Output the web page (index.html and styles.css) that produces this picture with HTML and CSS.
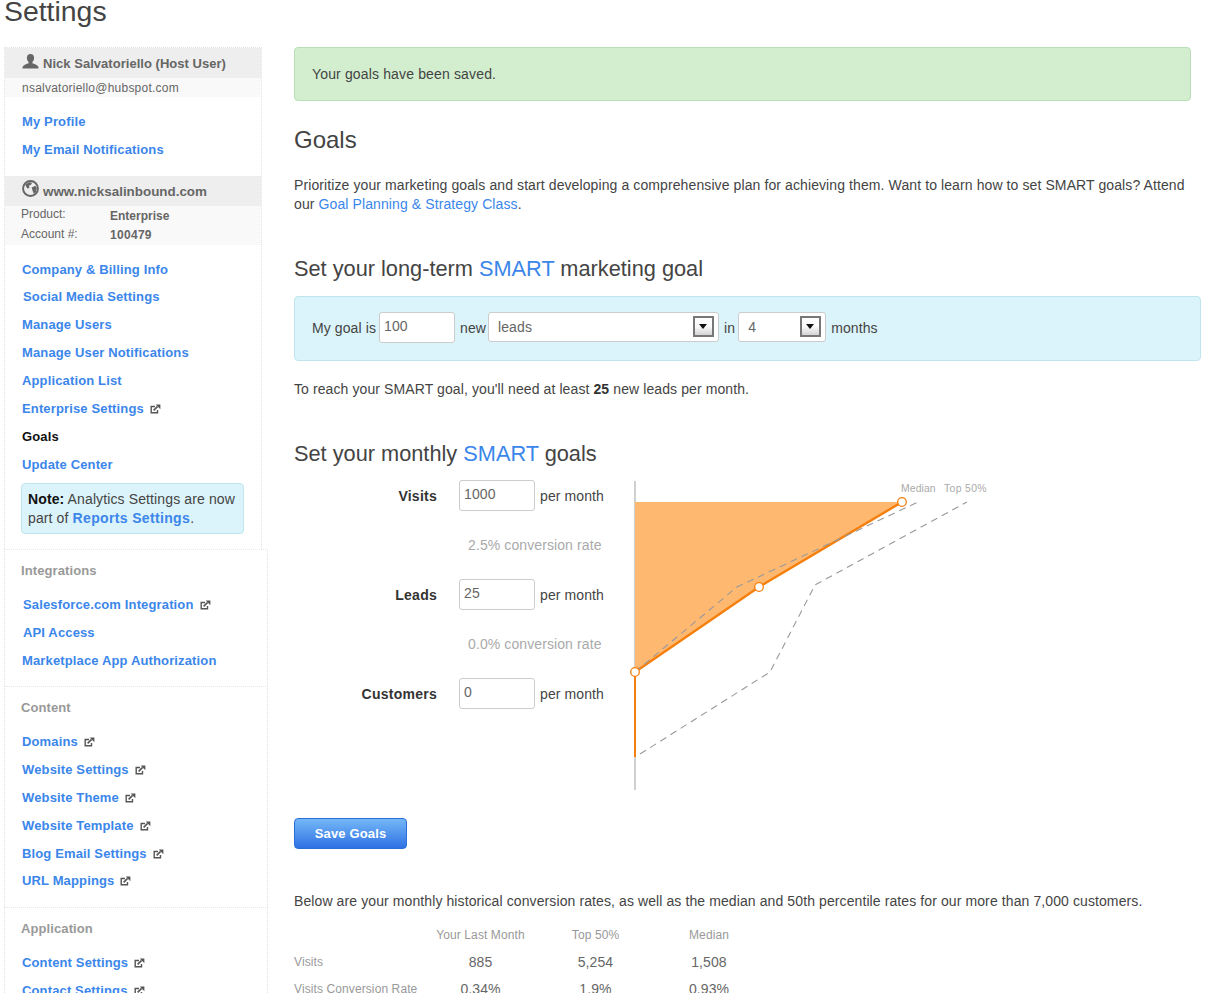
FILE: index.html
```html
<!DOCTYPE html>
<html lang="en">
<head>
<meta charset="utf-8">
<title>Settings</title>
<link rel="stylesheet" href="styles.css">
</head>
<body>
<svg class="defs" width="0" height="0" aria-hidden="true">
  <symbol id="ext" viewBox="0 0 11 10">
    <path d="M5 2.500H1.200v6.300h6.300V6" fill="none" stroke="#555" stroke-width="1.400"/>
    <path d="M3.600 6.400 7.600 2.400" fill="none" stroke="#555" stroke-width="1.600"/>
    <path d="M5.800 0.600H10.400V5.200Z" fill="#555"/>
  </symbol>
</svg>
<h1 class="title">Settings</h1>
<div class="layout">
  <nav class="side">
    <div class="box">
      <div class="head"><svg class="hicon" viewBox="0 0 16 15"><path d="M8 0c2.300 0 3.600 1.700 3.600 3.900 0 1.700-.8 3.200-1.700 4v1.400c1.700.7 5.100 1.700 5.800 3.200.2.600.3 1.300.3 2.100H0c0-.8.100-1.500.3-2.100.7-1.500 4.100-2.500 5.800-3.200V7.900C5.200 7.100 4.400 5.600 4.400 3.900 4.400 1.700 5.700 0 8 0z" fill="#666"/></svg><b class="user-name">Nick Salvatoriello (Host User)</b></div>
      <div class="sub email">nsalvatoriello@hubspot.com</div>
      <ul class="links first">
        <li><a>My Profile</a></li>
        <li><a>My Email Notifications</a></li>
      </ul>
      <div class="head site"><svg class="hicon globe" viewBox="0 0 16 16"><circle cx="8" cy="8" r="7" fill="none" stroke="#666" stroke-width="1.800"/><path d="M3 4.500 6.500 2l3 .5-1 2-2 1 .5 2-2 .5zM9 7l3.500-1.500 1.500 2-1 4-2 1.500-1-3z" fill="#666"/></svg><b>www.nicksalinbound.com</b></div>
      <div class="sub account">
        <div class="acct-row"><span>Product:</span><b>Enterprise</b></div>
        <div class="acct-row"><span>Account #:</span><b>100479</b></div>
      </div>
      <ul class="links second">
        <li><a>Company &amp; Billing Info</a></li>
        <li class="nudge"><a>Social Media Settings</a></li>
        <li><a>Manage Users</a></li>
        <li><a>Manage User Notifications</a></li>
        <li><a>Application List</a></li>
        <li><a>Enterprise Settings</a><svg class="ext"><use href="#ext"/></svg></li>
        <li class="current">Goals</li>
        <li><a>Update Center</a></li>
      </ul>
      <div class="note"><b>Note:</b> Analytics Settings are now part of <a>Reports Settings</a>.</div>
    </div>
    <div class="group">
      <div class="group-title">Integrations</div>
      <ul class="links">
        <li class="nudge"><a>Salesforce.com Integration</a><svg class="ext"><use href="#ext"/></svg></li>
        <li class="nudge"><a>API Access</a></li>
        <li><a>Marketplace App Authorization</a></li>
      </ul>
    </div>
    <div class="group">
      <div class="group-title">Content</div>
      <ul class="links">
        <li><a>Domains</a><svg class="ext"><use href="#ext"/></svg></li>
        <li><a>Website Settings</a><svg class="ext"><use href="#ext"/></svg></li>
        <li><a>Website Theme</a><svg class="ext"><use href="#ext"/></svg></li>
        <li><a>Website Template</a><svg class="ext"><use href="#ext"/></svg></li>
        <li><a>Blog Email Settings</a><svg class="ext"><use href="#ext"/></svg></li>
        <li><a>URL Mappings</a><svg class="ext"><use href="#ext"/></svg></li>
      </ul>
    </div>
    <div class="group">
      <div class="group-title">Application</div>
      <ul class="links">
        <li><a>Content Settings</a><svg class="ext"><use href="#ext"/></svg></li>
        <li><a>Contact Settings</a><svg class="ext"><use href="#ext"/></svg></li>
      </ul>
    </div>
  </nav>

  <main class="main">
    <div class="saved">Your goals have been saved.</div>
    <h2 class="goals-title">Goals</h2>
    <p class="intro">Prioritize your marketing goals and start developing a comprehensive plan for achieving them. Want to learn how to set SMART goals? Attend our <a class="link">Goal Planning &amp; Strategy Class</a>.</p>
    <h3 class="sub-title long">Set your long-term <a class="link">SMART</a> marketing goal</h3>
    <div class="goal-box">
      <span>My goal is</span>
      <span class="input w76 tall">100</span>
      <span class="after">new</span>
      <span class="select w231"><span>leads</span><i class="arrow"></i></span>
      <span class="after">in</span>
      <span class="select w88"><span>4</span><i class="arrow"></i></span>
      <span class="after">months</span>
    </div>
    <p class="reach">To reach your SMART goal, you'll need at least <b>25</b> new leads per month.</p>
    <h3 class="sub-title monthly">Set your monthly <a class="link">SMART</a> goals</h3>
    <div class="planner">
      <div class="form">
        <div class="row"><label>Visits</label><span class="input w76 tall">1000</span><span>per month</span></div>
        <div class="rate">2.5% conversion rate</div>
        <div class="row"><label>Leads</label><span class="input w76 tall">25</span><span>per month</span></div>
        <div class="rate">0.0% conversion rate</div>
        <div class="row"><label>Customers</label><span class="input w76 tall">0</span><span>per month</span></div>
      </div>
      <div class="chart">
        <svg width="370" height="320" viewBox="0 0 370 320">
          <text class="legend" x="272" y="22">Median</text>
          <text class="legend wide" x="315" y="22">Top 50%</text>
          <rect x="5" y="11" width="2" height="309" fill="#d0d0d0"/>
          <path d="M6 32H273L130 117 6 202Z" fill="#ffb870"/>
          <path d="M6 202 130 117 273 32" fill="none" stroke="#f57f0c" stroke-width="2.400"/>
          <rect x="5" y="202" width="2" height="85" fill="#f57f0c"/>
          <path d="M6 202 108 117 289 32" fill="none" stroke="#999" stroke-width="1.100" stroke-dasharray="7 5"/>
          <path d="M11 284 141 202 186 115 338 32" fill="none" stroke="#999" stroke-width="1.100" stroke-dasharray="7 5"/>
          <circle cx="6" cy="202" r="4.300" fill="#fff" stroke="#f57f0c" stroke-width="1.300"/>
          <circle cx="130" cy="117" r="4.300" fill="#fff" stroke="#f57f0c" stroke-width="1.300"/>
          <circle cx="273" cy="32" r="4.300" fill="#fff" stroke="#f57f0c" stroke-width="1.300"/>
        </svg>
      </div>
    </div>
    <button class="save" type="button">Save Goals</button>
    <p class="below">Below are your monthly historical conversion rates, as well as the median and 50th percentile rates for our more than 7,000 customers.</p>
    <table class="stats">
      <thead>
        <tr><th></th><th class="c1">Your Last Month</th><th class="c2">Top 50%</th><th class="c3">Median</th></tr>
      </thead>
      <tbody>
        <tr><th>Visits</th><td class="c1">885</td><td class="c2">5,254</td><td class="c3">1,508</td></tr>
        <tr><th>Visits Conversion Rate</th><td class="c1">0.34%</td><td class="c2">1.9%</td><td class="c3">0.93%</td></tr>
      </tbody>
    </table>
  </main>
</div>
</body>
</html>
```
FILE: styles.css
```css
html, body { margin: 0; padding: 0; height: 993px; overflow: hidden; background: #fff; }
body { font-family: "Liberation Sans", Arial, sans-serif; font-size: 14px; color: #444; }
.defs { display: block; height: 0; }
a { color: #3b86ea; }
.title { margin: -9px 0 0 4px; height: 56px; font-size: 28.400px; line-height: 40px; font-weight: 400; color: #444; }
.layout { display: flex; align-items: flex-start; }

/* sidebar */
.side { margin-left: 4px; width: 264px; flex: none; }
.box { width: 258px; border: 1px dotted #e2e2e2; border-bottom: 0; height: 502px; box-sizing: border-box; }
.head { height: 30px; background: #eee; display: flex; align-items: center; padding-left: 17px; color: #666; font-size: 14px; gap: 4px; }
.head b { font-size: 13.400px; position: relative; top: 1px; }
.head .user-name { font-size: 13px; top: 0; letter-spacing: .03px; }
.hicon { width: 17px; height: 15px; margin-top: -4px; }
.hicon.globe { height: 17px; margin-top: -5px; }
.sub { background: #f9f9f9; color: #666; font-size: 12px; }
.email { height: 19px; line-height: 20px; padding-left: 17px; letter-spacing: .23px; }
.account { height: 39px; padding-left: 16px; }
.acct-row { display: flex; height: 20px; line-height: 17px; }
.acct-row span { width: 89px; }
.acct-row b { padding-top: 2px; }
.acct-row + .acct-row b { padding-top: 1px; letter-spacing: .3px; }
.links { list-style: none; margin: 0; padding: 0 0 0 17px; }
.links li { height: 27.900px; line-height: 27.900px; font-size: 13px; font-weight: 700; white-space: nowrap; display: flex; align-items: center; letter-spacing: .14px; }
.links li.nudge { padding-left: 1px; }
.links.first { padding-top: 11px; padding-bottom: 12px; }
.links.second { padding-top: 10.800px; }
.current { color: #111; }
.ext { width: 11px; height: 10px; margin-left: 6px; }
.note { margin: 4px 0 0 16px; width: 223px; height: 51px; box-sizing: border-box; padding: 6px 6px; background: #dbf3fa; border: 1px solid #bfe6ee; border-radius: 4px; font-size: 14px; line-height: 19px; color: #444; letter-spacing: .12px; }
.note b { color: #111; }
.note a { font-weight: 700; letter-spacing: .35px; }
.group { border: 1px dotted #e2e2e2; border-bottom: 0; border-top-color: #e8e8e8; box-sizing: border-box; }
.group-title { padding: 11px 0 0 16px; height: 41px; box-sizing: border-box; font-size: 13px; font-weight: 700; color: #999; line-height: 20px; letter-spacing: .1px; }
.group .links { padding-bottom: 12px; }
.box + .group { height: 137px; }
.group:nth-child(3) { height: 221px; }

/* main */
.main { margin-left: 26px; width: 907px; flex: none; letter-spacing: .1px; }
.link { color: #3b86ea; }
.saved { width: 897px; height: 54px; box-sizing: border-box; padding: 18px 17px 0; background: #d2eecf; border: 1px solid #b9dfb6; border-radius: 4px; line-height: 17px; color: #444; letter-spacing: .15px; }
.goals-title { margin: 25px 0 0; font-size: 24px; line-height: 28px; font-weight: 400; color: #444; letter-spacing: 0; }
.intro { margin: 22px 0 0; line-height: 19px; color: #444; }
.sub-title { font-size: 21.750px; line-height: 28px; font-weight: 400; color: #444; margin: 0; letter-spacing: 0; }
.sub-title.long { margin-top: 41px; }
.goal-box { margin-top: 13px; width: 907px; height: 65px; box-sizing: border-box; padding: 0 17px 2px; background: #dbf3fa; border: 1px solid #bfe6ee; border-radius: 4px; display: flex; align-items: center; gap: 3px; }
.after { margin-left: 2px; }
.input, .select { display: inline-flex; align-items: center; background: #fff; border: 1px solid #ccc; border-radius: 3px; box-sizing: border-box; color: #666; }
.input { padding: 0 4px 3px; }
.tall { height: 31px; }
.w76 { width: 76px; }
.select { height: 30px; padding: 0 4px 0 9px; margin-bottom: 2px; justify-content: space-between; }
.w231 { width: 231px; margin-left: -1px; }
.w88 { width: 88px; }
.arrow { display: block; width: 21px; height: 21px; box-sizing: border-box; border: 2px solid #777; background: linear-gradient(#fdfdfd 45%, #d4d4d4); position: relative; }
.arrow::after { content: ""; position: absolute; left: 4px; top: 6px; border: 4.500px solid transparent; border-top: 5px solid #111; border-bottom: 0; }
.reach { margin: 19px 0 0; line-height: 19px; }
.reach b { color: #333; }
.sub-title.monthly { margin-top: 41px; }
.planner { display: flex; }
.form { width: 335px; flex: none; padding-top: 12px; }
.row { display: flex; align-items: center; height: 31px; gap: 5px; }
.row label { width: 143px; margin-right: 17px; text-align: right; font-weight: 700; color: #333; letter-spacing: .25px; }
.rate { height: 68px; line-height: 68px; padding-left: 174px; color: #aaa; }
.chart { margin-top: 2px; }
.chart svg { display: block; }
.legend { font-size: 10.400px; fill: #aaa; letter-spacing: .1px; }
.legend.wide { letter-spacing: .35px; }
.save { display: block; margin-top: 28px; width: 113px; height: 31px; border: 1px solid #2a6ed8; border-radius: 4px; background: linear-gradient(#74b8f7, #2f71e4); color: #fff; font-family: inherit; font-size: 13px; font-weight: 700; padding: 0; letter-spacing: .15px; }
.below { margin: 43px 0 0; line-height: 19px; color: #444; }
.stats { margin-top: 12px; border-collapse: collapse; font-size: 12px; }
.stats th { font-weight: 400; color: #999; text-align: left; padding: 0; }
.stats thead th { height: 24px; text-align: center; }
.stats tbody th, .stats td { height: 30px; }
.stats tbody tr:last-child th, .stats tbody tr:last-child td { height: 24px; }
.stats td { font-size: 14px; text-align: center; color: #666; padding: 0; }
.stats th:first-child { width: 130px; }
.c1 { width: 113px; }
.c2 { width: 117px; }
.c3 { width: 110px; }
```
